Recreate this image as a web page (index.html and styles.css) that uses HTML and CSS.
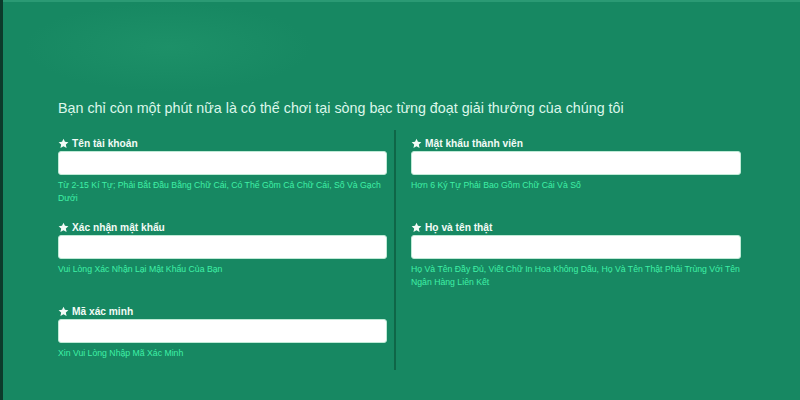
FILE: index.html
```html
<!DOCTYPE html>
<html lang="vi">
<head>
<meta charset="utf-8">
<title>Đăng ký</title>
<link rel="stylesheet" href="styles.css">
</head>
<body>
<div class="panel">
  <div class="glow"></div>
  <h1 class="title">Bạn chỉ còn một phút nữa là có thể chơi tại sòng bạc từng đoạt giải thưởng của chúng tôi</h1>
  <div class="form">
    <div class="col col-left">
      <div class="field">
        <label class="label"><svg class="star" viewBox="0 0 24 24"><path d="M12 1.5l3.2 6.9 7.5.8-5.6 5.1 1.6 7.4L12 17.9l-6.7 3.8 1.6-7.4L1.3 9.2l7.5-.8z"/></svg>Tên tài khoản</label>
        <div class="input"></div>
        <p class="help">Từ 2-15 Kí Tự; Phải Bắt Đầu Bằng Chữ Cái, Có Thể Gồm Cả Chữ Cái, Số Và Gạch Dưới</p>
      </div>
      <div class="field">
        <label class="label"><svg class="star" viewBox="0 0 24 24"><path d="M12 1.5l3.2 6.9 7.5.8-5.6 5.1 1.6 7.4L12 17.9l-6.7 3.8 1.6-7.4L1.3 9.2l7.5-.8z"/></svg>Xác nhận mật khẩu</label>
        <div class="input"></div>
        <p class="help">Vui Lòng Xác Nhận Lại Mật Khẩu Của Bạn</p>
      </div>
      <div class="field">
        <label class="label"><svg class="star" viewBox="0 0 24 24"><path d="M12 1.5l3.2 6.9 7.5.8-5.6 5.1 1.6 7.4L12 17.9l-6.7 3.8 1.6-7.4L1.3 9.2l7.5-.8z"/></svg>Mã xác minh</label>
        <div class="input"></div>
        <p class="help">Xin Vui Lòng Nhập Mã Xác Minh</p>
      </div>
    </div>
    <div class="divider"></div>
    <div class="col col-right">
      <div class="field">
        <label class="label"><svg class="star" viewBox="0 0 24 24"><path d="M12 1.5l3.2 6.9 7.5.8-5.6 5.1 1.6 7.4L12 17.9l-6.7 3.8 1.6-7.4L1.3 9.2l7.5-.8z"/></svg>Mật khẩu thành viên</label>
        <div class="input"></div>
        <p class="help">Hơn 6 Ký Tự Phải Bao Gồm Chữ Cái Và Số</p>
      </div>
      <div class="field">
        <label class="label"><svg class="star" viewBox="0 0 24 24"><path d="M12 1.5l3.2 6.9 7.5.8-5.6 5.1 1.6 7.4L12 17.9l-6.7 3.8 1.6-7.4L1.3 9.2l7.5-.8z"/></svg>Họ và tên thật</label>
        <div class="input"></div>
        <p class="help">Họ Và Tên Đầy Đủ, Viết Chữ In Hoa Không Dấu, Họ Và Tên Thật Phải Trùng Với Tên Ngân Hàng Liên Kết</p>
      </div>
    </div>
  </div>
</div>
</body>
</html>
```

FILE: styles.css
```css
html, body {
  margin: 0;
  padding: 0;
  background: #0c3b2b;
}
body {
  width: 800px;
  height: 400px;
  overflow: hidden;
  font-family: "Liberation Sans", Arial, sans-serif;
}
.panel {
  position: relative;
  margin-left: 3px;
  border-top: 2px solid #2b9a74;
  background: #178862;
  padding: 96px 0 0 55px;
  box-sizing: border-box;
  height: 400px;
}
.glow {
  position: absolute;
  left: 20px;
  top: 0;
  width: 290px;
  height: 90px;
  border-radius: 50%;
  background: radial-gradient(ellipse at center, rgba(40, 160, 115, 0.35), rgba(40, 160, 115, 0) 70%);
  pointer-events: none;
}
.title {
  position: relative;
  margin: 0 0 12px;
  font-size: 14.3px;
  line-height: 20px;
  font-weight: normal;
  color: #dcf7ea;
}
.form {
  display: flex;
}
.col {
  padding-top: 6px;
}
.col-left {
  width: 329px;
  margin-right: 7px;
}
.divider {
  width: 2px;
  height: 240px;
  background: #0f6647;
}
.col-right {
  width: 330px;
  margin-left: 15px;
}
.field {
  height: 84px;
}
.label {
  display: flex;
  align-items: center;
  height: 14px;
  font-size: 10.2px;
  font-weight: bold;
  color: #f2fbf6;
}
.star {
  width: 11px;
  height: 11px;
  margin-right: 3px;
  fill: #f4fbf7;
}
.input {
  margin-top: 1px;
  height: 22px;
  background: #ffffff;
  border: 1px solid #bfead6;
  border-radius: 3px;
}
.help {
  margin: 4px 0 0;
  font-size: 8.7px;
  line-height: 13px;
  color: #3ff0a6;
}
```
